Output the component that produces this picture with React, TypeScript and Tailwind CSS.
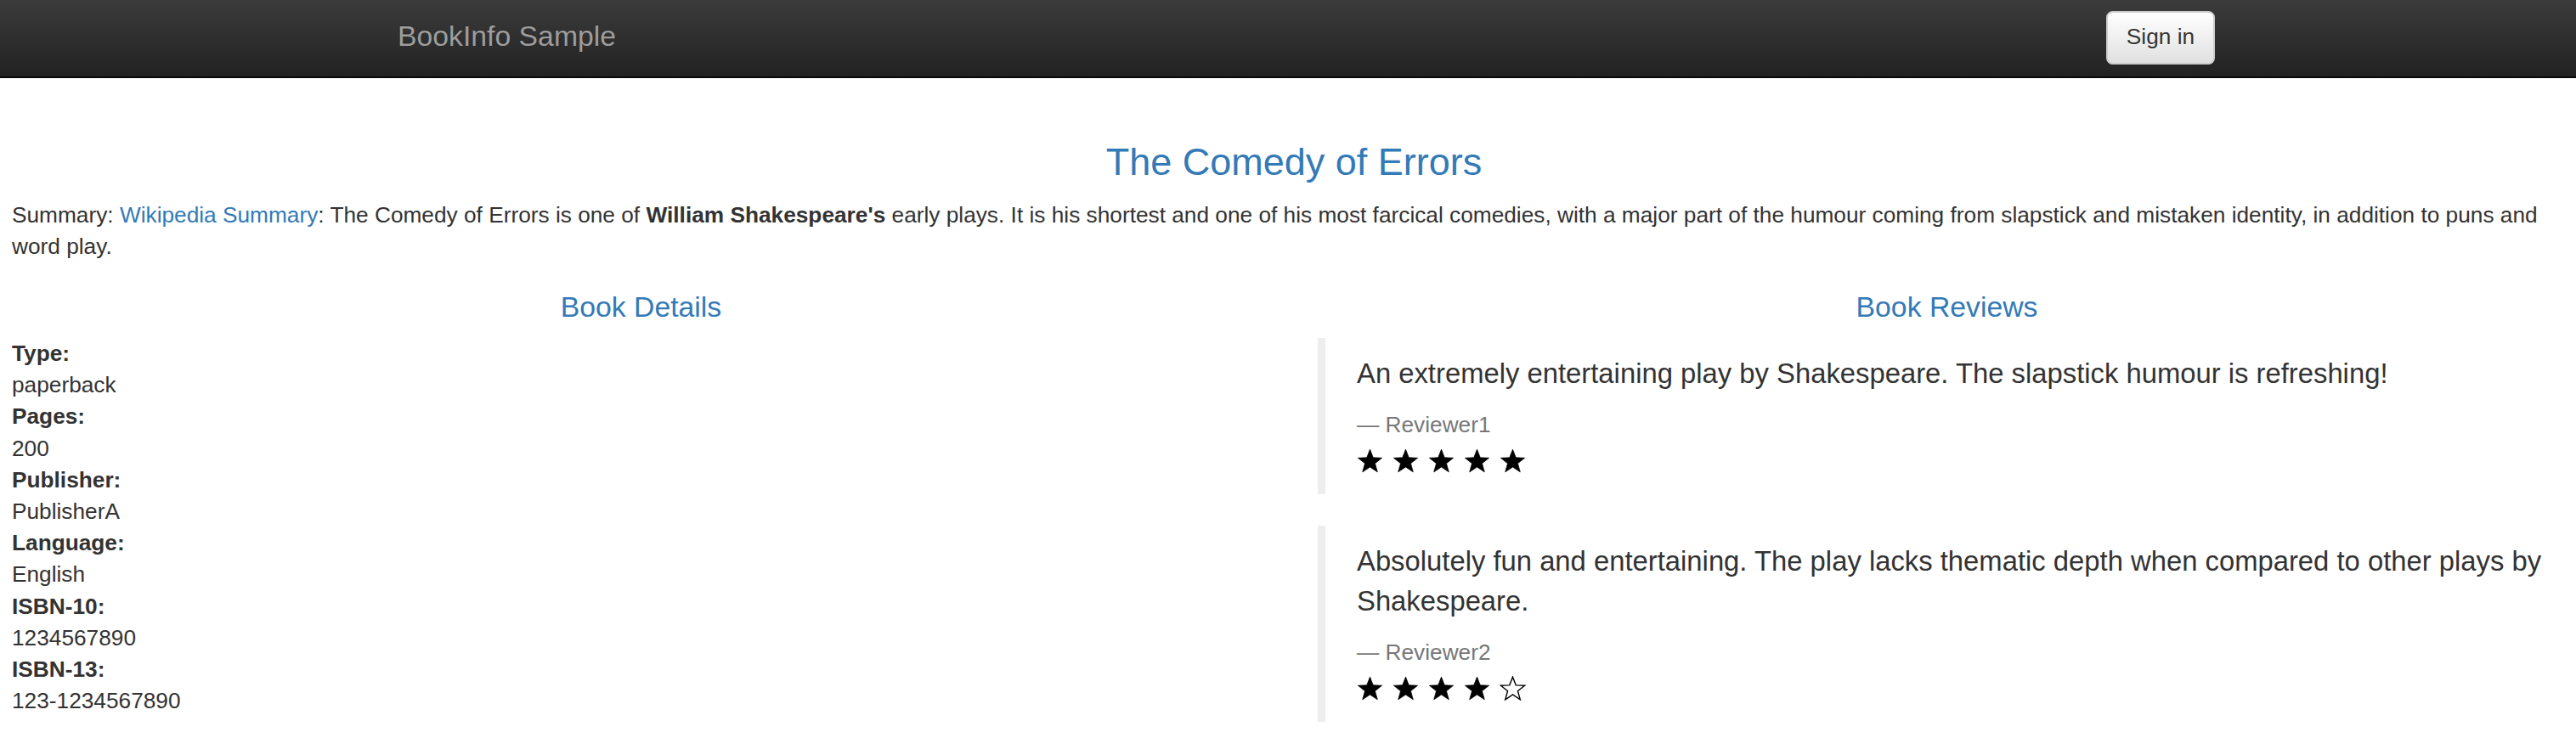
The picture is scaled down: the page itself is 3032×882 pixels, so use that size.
const details = [
  { label: 'Type:', value: 'paperback' },
  { label: 'Pages:', value: '200' },
  { label: 'Publisher:', value: 'PublisherA' },
  { label: 'Language:', value: 'English' },
  { label: 'ISBN-10:', value: '1234567890' },
  { label: 'ISBN-13:', value: '123-1234567890' },
];

const reviews = [
  {
    text: 'An extremely entertaining play by Shakespeare. The slapstick humour is refreshing!',
    reviewer: 'Reviewer1',
    stars: 5,
  },
  {
    text: 'Absolutely fun and entertaining. The play lacks thematic depth when compared to other plays by Shakespeare.',
    reviewer: 'Reviewer2',
    stars: 4,
  },
];

const Star = ({ full }: { full: boolean }) => (
  <svg viewBox="0 0 24 23" className="w-[31px] h-[30px] mr-[11px]">
    <polygon
      points="12,0.8 14.9,8.3 22.9,8.6 16.6,13.6 18.8,21.4 12,16.9 5.2,21.4 7.4,13.6 1.1,8.6 9.1,8.3"
      fill={full ? '#000' : 'none'}
      stroke="#000"
      strokeWidth={full ? 0.6 : 1.1}
      strokeLinejoin="miter"
    />
  </svg>
);

const App = () => {
  return (
    <div className="w-[3032px] min-h-[882px] bg-white overflow-hidden font-['Liberation_Sans',Arial,sans-serif] text-[#333] text-[26.25px] leading-[37.2px]">
      <nav className="h-[92px] border-b-2 border-[#080808] bg-linear-to-b from-[#3c3c3c] to-[#222]">
        <div className="ml-[440px] w-[2195px] h-full px-[28px] flex items-center justify-between">
          <a href="#" className="text-[33.75px] leading-[37.5px] text-[#9d9d9d] pb-[4px] [text-shadow:0_-1px_0_rgba(0,0,0,0.25)]">
            BookInfo Sample
          </a>
          <button
            type="button"
            className="w-[128px] h-[63px] mt-[-2px] rounded-[7.5px] border-2 border-[#ccc] bg-linear-to-b from-white to-[#e0e0e0] text-[#333] text-[26.25px] [text-shadow:0_1px_0_#fff] shadow-[inset_0_1px_0_rgba(255,255,255,0.15),0_1px_1px_rgba(0,0,0,0.075)]"
          >
            Sign in
          </button>
        </div>
      </nav>

      <div className="pl-[14px]">
        <h3 className="mt-[74px] mb-[19.5px] text-center text-[45px] leading-[49.5px] font-medium text-[#337ab7]">
          The Comedy of Errors
        </h3>
        <p>
          Summary: <a href="#" className="text-[#337ab7]">Wikipedia Summary</a>: The Comedy of Errors is one of{' '}
          <b className="font-bold">William Shakespeare's</b> early plays. It is his shortest and one of his most
          farcical comedies, with a major part of the humour coming from slapstick and mistaken identity, in
          addition to puns and word play.
        </p>

        <div className="mt-[34px] grid grid-cols-2 gap-x-[56px]">
          <div>
            <h4 className="mb-[17.5px] text-center text-[33.75px] leading-[37px] font-medium text-[#337ab7]">
              Book Details
            </h4>
            <dl>
              {details.map((d) => (
                <div key={d.label}>
                  <dt className="font-bold">{d.label}</dt>
                  <dd>{d.value}</dd>
                </div>
              ))}
            </dl>
          </div>

          <div>
            <h4 className="mb-[17.5px] text-center text-[33.75px] leading-[37px] font-medium text-[#337ab7]">
              Book Reviews
            </h4>
            {reviews.map((r) => (
              <blockquote
                key={r.reviewer}
                className="mb-[37.5px] border-l-[9px] border-[#eee] pl-[37px] pr-[37px] pt-[18.75px] pb-[16px] text-[32.8px] leading-[46.5px]"
              >
                <p className="mb-[18.75px]">{r.text}</p>
                <small className="block text-[26.25px] leading-[37.5px] text-[#777]">
                  {'\u2014\u00a0'}
                  {r.reviewer}
                </small>
                <div className="flex items-center h-[46.5px]">
                  {[0, 1, 2, 3, 4].map((i) => (
                    <Star key={i} full={i < r.stars} />
                  ))}
                </div>
              </blockquote>
            ))}
          </div>
        </div>
      </div>
    </div>
  );
};

export default App;
